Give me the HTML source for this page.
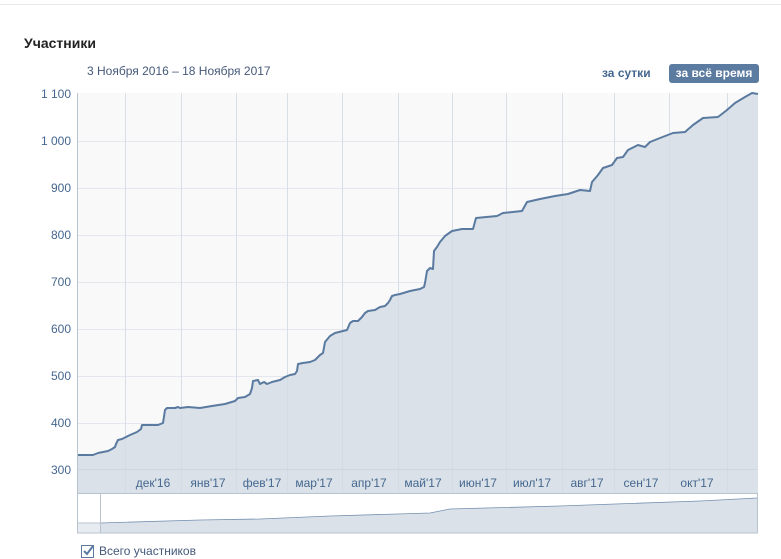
<!DOCTYPE html>
<html><head><meta charset="utf-8"><style>
body{margin:0;width:781px;height:559px;background:#fff;font-family:"Liberation Sans",sans-serif;position:relative;overflow:hidden}
.t{position:absolute;white-space:nowrap}
</style></head><body>
<div style="position:absolute;left:0;top:4px;width:781px;height:1px;background:#e7e8ec"></div>
<div class="t" style="left:24px;top:35px;font-size:14px;font-weight:bold;color:#222">Участники</div>
<div class="t" style="left:87px;top:64px;font-size:12px;color:#45597a">3 Ноября 2016 – 18 Ноября 2017</div>
<div class="t" style="left:602px;top:66px;font-size:12px;font-weight:bold;color:#45678f">за сутки</div>
<div class="t" style="left:669px;top:64px;width:90px;height:19px;background:#5b7ba0;border-radius:3px;color:#fff;font-size:12px;font-weight:bold;line-height:19px;text-align:center">за всё время</div>
<svg width="781" height="559" style="position:absolute;left:0;top:0" font-family="Liberation Sans,sans-serif">
<rect x="78" y="93" width="680" height="400" fill="#f9f9fa"/>
<g stroke="#e4e7ee" stroke-width="1">
<line x1="78" y1="141.5" x2="758" y2="141.5"/><line x1="78" y1="188.5" x2="758" y2="188.5"/><line x1="78" y1="235.5" x2="758" y2="235.5"/><line x1="78" y1="282.5" x2="758" y2="282.5"/><line x1="78" y1="329.5" x2="758" y2="329.5"/><line x1="78" y1="376.5" x2="758" y2="376.5"/><line x1="78" y1="423.5" x2="758" y2="423.5"/>
</g>
<g stroke="#e4e7ee"><path d="M125.5 93V493M181.5 93V493M236.5 93V493M287.5 93V493M342.5 93V493M398.5 93V493M452.5 93V493M506.5 93V493M562.5 93V493M614.5 93V493M669.5 93V493M727.5 93V493"/></g>
<path id="c" d="M78 455L93 455L98 453L108 451L112 449L115 447L116 444L118 440L122 439L130 435L137 432L141 429L142 425L150 425L158 425L163 423L165 410L167 408L175 408L178 407L180 408L188 407L200 408L212 406L225 404L235 401L238 398L245 397L250 394L252 388L253 381L258 380L260 384L264 382L267 384L272 382L280 380L285 377L290 375L295 374L297 371L298 364L303 363L310 362L315 360L318 357L320 355L323 353L325 342L330 336L335 333L343 331L347 330L350 323L353 321L358 321L362 317L365 313L368 311L375 310L380 307L385 306L388 303L390 300L392 296L395 295L400 294L410 291L420 289L424 287L425 283L427 271L430 268L433 269L434 251L437 247L440 242L445 236L452 231L462 229L473 229L476 218L497 216L503 213L522 211L527 202L540 199L555 196L568 194L580 190L590 191L592 182L598 175L603 168L612 165L617 158L623 157L628 150L638 145L645 147L650 142L660 138L673 133L685 132L693 125L703 118L718 117L727 110L735 103L745 97L752 93L758 94" fill="none"/>
<path d="M78 455L93 455L98 453L108 451L112 449L115 447L116 444L118 440L122 439L130 435L137 432L141 429L142 425L150 425L158 425L163 423L165 410L167 408L175 408L178 407L180 408L188 407L200 408L212 406L225 404L235 401L238 398L245 397L250 394L252 388L253 381L258 380L260 384L264 382L267 384L272 382L280 380L285 377L290 375L295 374L297 371L298 364L303 363L310 362L315 360L318 357L320 355L323 353L325 342L330 336L335 333L343 331L347 330L350 323L353 321L358 321L362 317L365 313L368 311L375 310L380 307L385 306L388 303L390 300L392 296L395 295L400 294L410 291L420 289L424 287L425 283L427 271L430 268L433 269L434 251L437 247L440 242L445 236L452 231L462 229L473 229L476 218L497 216L503 213L522 211L527 202L540 199L555 196L568 194L580 190L590 191L592 182L598 175L603 168L612 165L617 158L623 157L628 150L638 145L645 147L650 142L660 138L673 133L685 132L693 125L703 118L718 117L727 110L735 103L745 97L752 93L758 94L758 493L78 493Z" fill="#dae1e8"/>
<g stroke="#ced7e1"><path d="M125.5 93V493M181.5 93V493M236.5 93V493M287.5 93V493M342.5 93V493M398.5 93V493M452.5 93V493M506.5 93V493M562.5 93V493M614.5 93V493M669.5 93V493M727.5 93V493" opacity="0.5"/><line x1="78" y1="469.5" x2="758" y2="469.5"/></g>
<use href="#c" stroke="#5a7aa0" stroke-width="2" stroke-linejoin="round"/>
<line x1="77.5" y1="93" x2="77.5" y2="533" stroke="#b8c3d0"/>
<g font-size="12" fill="#45678f" text-anchor="end">
<text x="71" y="98">1 100</text><text x="71" y="145">1 000</text><text x="71" y="192">900</text><text x="71" y="239">800</text><text x="71" y="286">700</text><text x="71" y="333">600</text><text x="71" y="380">500</text><text x="71" y="427">400</text><text x="71" y="474">300</text>
</g>
<g font-size="12" fill="#45678f" text-anchor="middle">
<text x="153" y="487">дек'16</text><text x="208" y="487">янв'17</text><text x="262" y="487">фев'17</text><text x="314" y="487">мар'17</text><text x="369" y="487">апр'17</text><text x="423" y="487">май'17</text><text x="478" y="487">июн'17</text><text x="532" y="487">июл'17</text><text x="587" y="487">авг'17</text><text x="641" y="487">сен'17</text><text x="697" y="487">окт'17</text>
</g>
<rect x="78" y="494" width="680" height="39" fill="#fff"/>
<path d="M100 523L200 520L260 519L330 516L430 513L450 509L560 506L700 501L757 498L757 533L100 533Z" fill="#dae1e8"/>
<path d="M100 523L200 520L260 519L330 516L430 513L450 509L560 506L700 501L757 498" fill="none" stroke="#7590b0" stroke-width="0.8"/>
<rect x="78" y="523" width="22" height="10" fill="#e8ecf1"/>
<line x1="78" y1="523" x2="100" y2="523" stroke="#b8c3d0"/>
<line x1="100.5" y1="494" x2="100.5" y2="533" stroke="#b8c3d0"/>
<rect x="77.5" y="493.5" width="680" height="39.5" fill="none" stroke="#b8c3d0"/>
<rect x="81.5" y="545.5" width="12" height="12" fill="#fff" stroke="#5a7aa0"/>
<path d="M84 551l3 3 6-8" fill="none" stroke="#5a7aa0" stroke-width="2"/>
<text x="99" y="555" font-size="12" fill="#45597a">Всего участников</text>
</svg>
</body></html>
